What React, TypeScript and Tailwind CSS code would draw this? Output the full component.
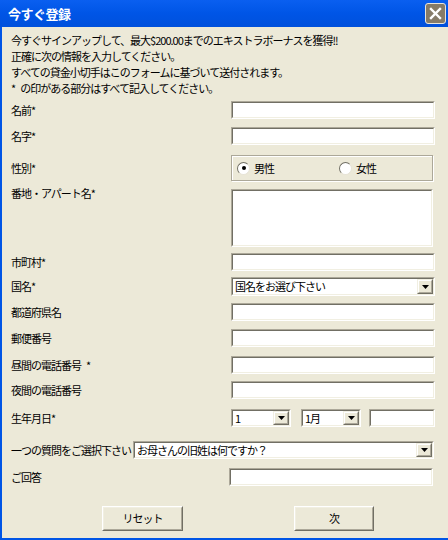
import React from 'react';

const font = { fontFamily: '"Noto Sans CJK JP", "Noto Sans", sans-serif' };

function Sunken({ className = '', children }: { className?: string; children?: React.ReactNode }) {
  return (
    <div className={`border border-t-[#aca899] border-l-[#aca899] border-b-white border-r-white ${className}`}>
      <div className="h-full border border-t-[#716f64] border-l-[#716f64] border-b-[#f1efe2] border-r-[#f1efe2] bg-white flex items-center">
        {children}
      </div>
    </div>
  );
}

function DropBtn() {
  return (
    <div className="ml-auto h-full w-[16px] border border-t-[#f1efe2] border-l-[#f1efe2] border-b-[#716f64] border-r-[#716f64]">
      <div className="h-full border border-t-white border-l-white border-b-[#aca899] border-r-[#aca899] bg-[#ece9d8] flex items-center justify-center">
        <svg width="7" height="4" viewBox="0 0 7 4">
          <path d="M0 0h7L3.5 4z" fill="#000" />
        </svg>
      </div>
    </div>
  );
}

function Select({ className = '', value }: { className?: string; value: string }) {
  return (
    <Sunken className={className}>
      <span className="pl-[2px] leading-none whitespace-nowrap">{value}</span>
      <DropBtn />
    </Sunken>
  );
}

function Radio({ checked, label }: { checked?: boolean; label: string }) {
  return (
    <div className="flex items-center gap-[4px]">
      <div className="w-[13px] h-[13px] rounded-full border border-t-[#716f64] border-l-[#716f64] border-b-[#e6e3d6] border-r-[#e6e3d6] bg-white flex items-center justify-center">
        {checked && <div className="w-[4px] h-[4px] rounded-full bg-black" />}
      </div>
      <span>{label}</span>
    </div>
  );
}

function Button({ label, className = '' }: { label: string; className?: string }) {
  return (
    <div className={`h-[25px] border border-t-white border-l-white border-b-[#716f64] border-r-[#716f64] ${className}`}>
      <div className="h-full border border-t-[#f1efe2] border-l-[#f1efe2] border-b-[#aca899] border-r-[#aca899] bg-[#ece9d8] flex items-center justify-center">
        {label}
      </div>
    </div>
  );
}

function Row({ label, children, className = '' }: { label: React.ReactNode; children: React.ReactNode; className?: string }) {
  return (
    <div className={`flex items-center justify-between ${className}`}>
      <span className="whitespace-nowrap">{label}</span>
      {children}
    </div>
  );
}

export default function App() {
  return (
    <div className="w-[448px] h-[540px] flex flex-col overflow-hidden bg-[#ece9d8]" style={font}>
      {/* title bar */}
      <div className="h-[27px] shrink-0 bg-gradient-to-b from-[#0a5ff0] via-[#0055e6] to-[#0050dc] flex items-center pl-[8px] pr-[2px]">
        <span className="text-white font-bold text-[13px] tracking-[-0.5px] leading-none">今すぐ登録</span>
        <div className="ml-auto w-[21px] h-[21px] rounded-[3px] border border-[#e8e4dc] bg-[#867b68] flex items-center justify-center">
          <svg width="13" height="13" viewBox="0 0 13 13">
            <path d="M2 2l9 9M11 2l-9 9" stroke="#fff" strokeWidth="2.4" strokeLinecap="square" />
          </svg>
        </div>
      </div>

      {/* body */}
      <div className="flex-1 border-l-2 border-b-2 border-[#0055e6] pl-[9px] pr-[13px] text-[11px] tracking-[-1px] text-black">
        <div className="pt-[5px] leading-[16px]">
          <p>今すぐサインアップして、最大$200.00までのエキストラボーナスを獲得!!</p>
          <p>正確に次の情報を入力してください。</p>
          <p>すべての貸金小切手はこのフォームに基づいて送付されます。</p>
          <p>
            *<span className="ml-[5px]">の印がある部分はすべて記入してください。</span>
          </p>
        </div>

        <Row label="名前*" className="mt-[5px] h-[18px]">
          <Sunken className="w-[204px] h-[18px]" />
        </Row>
        <Row label="名字*" className="mt-[8px] h-[18px]">
          <Sunken className="w-[204px] h-[18px]" />
        </Row>
        <Row label="性別*" className="mt-[10px] h-[26px]">
          <div className="w-[202px] mr-[2px] h-[26px] border border-[#aca899] shadow-[inset_1px_1px_0_#fff,1px_1px_0_#fff] flex items-center pl-[5px]">
            <div className="w-[102px]">
              <Radio checked label="男性" />
            </div>
            <Radio label="女性" />
          </div>
        </Row>
        <div className="mt-[8px] flex justify-between items-start h-[58px]">
          <span className="mt-[-4px]">番地・アパート名*</span>
          <Sunken className="w-[202px] mr-[2px] h-[58px]" />
        </div>
        <Row label="市町村*" className="mt-[6px] h-[18px]">
          <Sunken className="w-[204px] h-[18px]" />
        </Row>
        <Row label="国名*" className="mt-[6px] h-[19px]">
          <Select className="w-[204px] h-[19px]" value="国名をお選び下さい" />
        </Row>
        <Row label="都道府県名" className="mt-[7px] h-[18px]">
          <Sunken className="w-[204px] h-[18px]" />
        </Row>
        <Row label="郵便番号" className="mt-[8px] h-[18px]">
          <Sunken className="w-[204px] h-[18px]" />
        </Row>
        <Row
          label={
            <>
              昼間の電話番号<span className="ml-[5px]">*</span>
            </>
          }
          className="mt-[9px] h-[18px]"
        >
          <Sunken className="w-[204px] h-[18px]" />
        </Row>
        <Row label="夜間の電話番号" className="mt-[7px] h-[18px]">
          <Sunken className="w-[204px] h-[18px]" />
        </Row>
        <Row label="生年月日*" className="mt-[10px] h-[18px]">
          <div className="flex items-center">
            <Select className="w-[60px] h-[18px]" value="1" />
            <Select className="w-[60px] h-[18px] ml-[10px]" value="1月" />
            <Sunken className="w-[66px] h-[18px] ml-[8px]" />
          </div>
        </Row>
        <div className="mt-[14px] h-[18px] flex items-center">
          <span className="whitespace-nowrap">一つの質問をご選択下さい</span>
          <Select className="flex-1 ml-[2px] mr-[1px] h-[18px]" value="お母さんの旧姓は何ですか？" />
        </div>
        <Row label="ご回答" className="mt-[9px] h-[18px]">
          <Sunken className="w-[204px] mr-[2px] h-[18px]" />
        </Row>

        <div className="mt-[20px] flex">
          <Button label="リセット" className="ml-[91px] w-[81px]" />
          <Button label="次" className="ml-[111px] w-[80px]" />
        </div>
      </div>
    </div>
  );
}
